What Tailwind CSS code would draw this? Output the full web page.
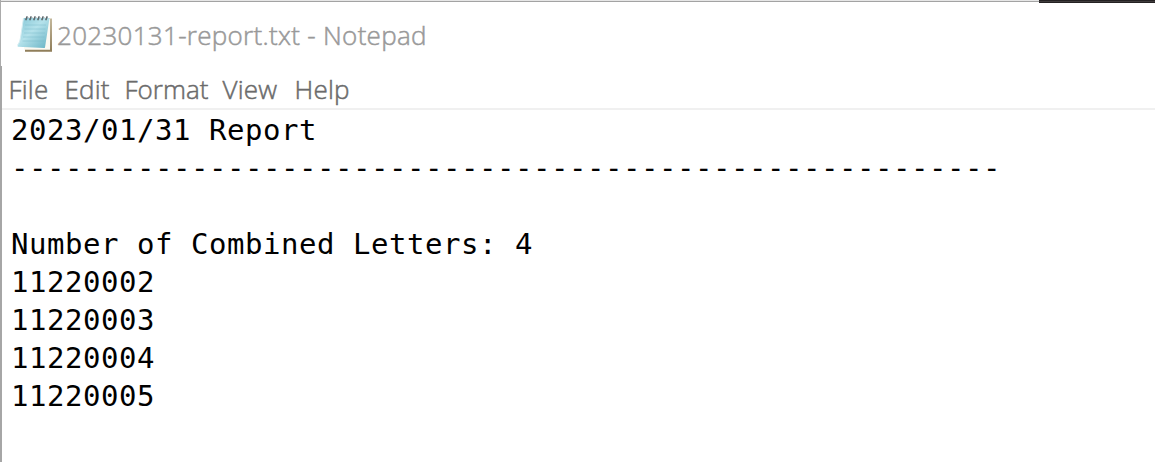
<!DOCTYPE html>
<html lang="en">
<head>
<meta charset="utf-8">
<title>20230131-report.txt - Notepad</title>
<script src="https://cdn.jsdelivr.net/npm/@tailwindcss/browser@4"></script>
</head>
<body class="bg-white overflow-hidden">
<div class="relative flex h-[462px] w-[1155px] flex-col overflow-hidden bg-white font-['Open_Sans','Noto_Sans',sans-serif]">
  <div class="absolute left-0 top-0 h-[66px] w-px bg-[#ababab]"></div>
  <div class="absolute left-0 top-[66px] h-[396px] w-[2px] bg-[#a6a6a6]"></div>
  <div class="flex h-[3px] shrink-0">
    <div class="h-[2px] w-[1039px] border-b border-[#a3a3a3] bg-[#e6e6e6]"></div>
    <div class="h-[3px] flex-1 border-y border-[#242122] bg-[#403c3d]"></div>
  </div>
  <header class="flex h-[66px] shrink-0 items-center pl-4">
    <svg class="-mt-[5px] h-[38px] w-[38px] shrink-0" viewBox="0 0 38 38">
      <defs>
        <linearGradient id="page" x1="0" y1="0" x2="1" y2="1">
          <stop offset="0" stop-color="#83c5d5"/><stop offset=".45" stop-color="#b5e2eb"/><stop offset="1" stop-color="#65b1c3"/>
        </linearGradient>
        <linearGradient id="back" x1="0" y1="0" x2="0" y2="1">
          <stop offset="0" stop-color="#c4b89c"/><stop offset="1" stop-color="#8e7c58"/>
        </linearGradient>
      </defs>
      <path d="M31 3.5H36V36.8H9V34Z" fill="url(#back)"/>
      <path d="M30 4H34V34.8H8V31Z" fill="#fbf9f2"/>
      <path d="M7.5 3H33.5L29 32.5Q28.8 33 28 33L2 31.8Q1.2 31.5 1.7 30Q4 27 4.500 23Z" fill="url(#page)"/>
      <path d="M7.500 3L4.500 23Q4 27 1.700 30" fill="none" stroke="#d5edf2"/>
      <path d="M9 10H30M8.500 14H29.500M8 18H29M7 22H28.500M6.500 26H28" stroke="#73b8c8" stroke-width=".8" opacity=".5"/>
      <path d="M10 4.500L11 2M14 4.500L15 2M18 4.500L19 2M22 4.500L23 2M26 4.500L27 2M30 4.500L31 2" stroke="#5b676c" stroke-width="1.700" stroke-linecap="round"/>
      <path d="M11 1.500L12.500 3M15 1.500L16.500 3M19 1.500L20.500 3M23 1.500L24.500 3M27 1.500L28.500 3" stroke="#a4adb0" stroke-width="1"/>
    </svg>
    <h1 class="-mt-[2px] ml-[3px] whitespace-nowrap text-[26px] leading-[36px] font-light tracking-[0.3px] text-[#999999] [-webkit-text-stroke:0.5px_#999999]">20230131-report.txt - Notepad</h1>
  </header>
  <nav class="flex h-[39px] shrink-0 items-center pl-[8.5px] text-[26px] leading-[36px] font-light tracking-[0.2px] text-[#6b6b6b] [-webkit-text-stroke:0.5px_#6b6b6b]">
    <span class="w-[56px]">File</span>
    <span class="w-[60px]">Edit</span>
    <span class="w-[98px] tracking-normal">Format</span>
    <span class="w-[72px]">View</span>
    <span>Help</span>
  </nav>
  <div class="ml-[2px] h-[2px] shrink-0 bg-[#f0f0f0]"></div>
  <main class="pl-[11px] pt-px font-['DejaVu_Sans_Mono',monospace] text-[29px] leading-[38px] tracking-[0.54px] text-black whitespace-pre"><p>2023/01/31 Report</p><p>-------------------------------------------------------</p><p> </p><p>Number of Combined Letters: 4</p><p>11220002</p><p>11220003</p><p>11220004</p><p>11220005</p></main>
</div>
</body>
</html>
